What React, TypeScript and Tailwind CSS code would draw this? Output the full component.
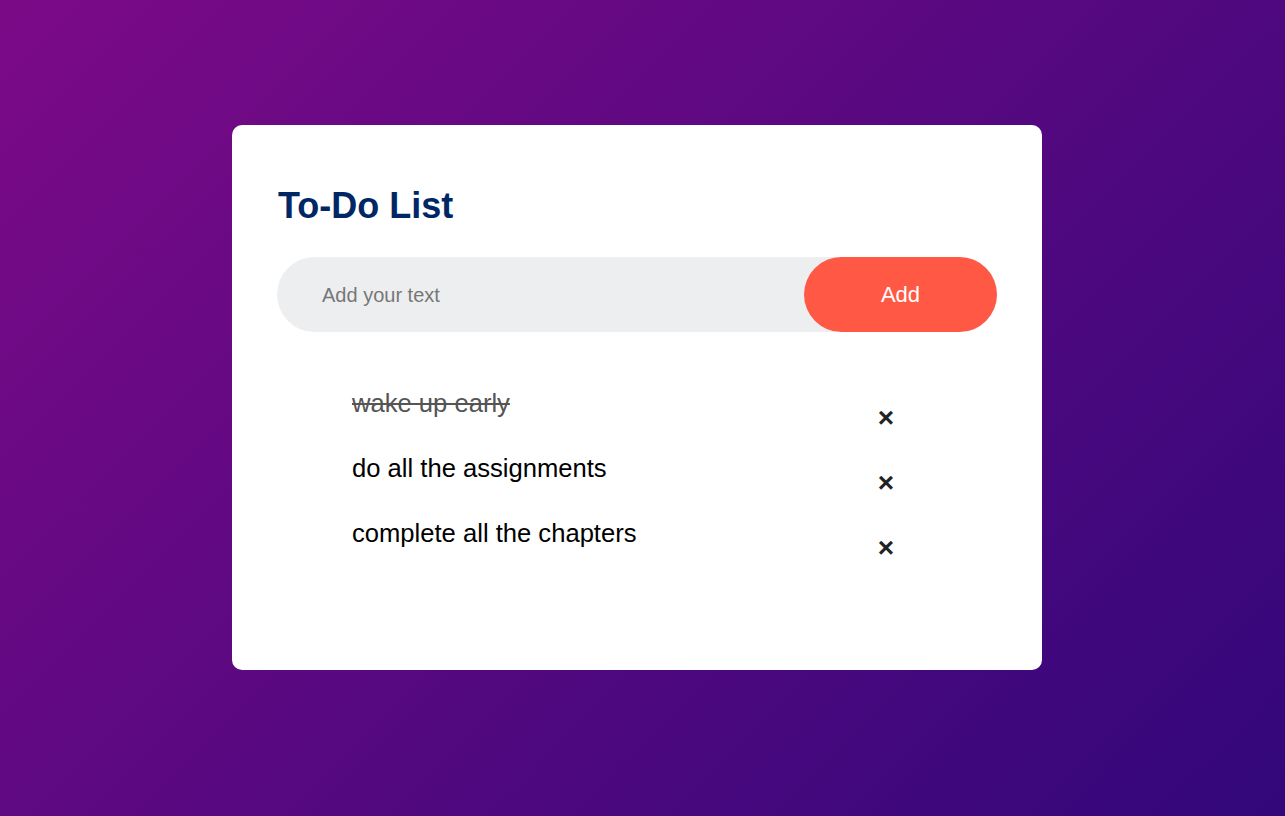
import React from "react";

const items = [
  { text: "wake up early", done: true },
  { text: "do all the assignments", done: false },
  { text: "complete all the chapters", done: false },
];

export default function App() {
  return (
    <div
      className="min-h-[816px] w-full bg-[linear-gradient(135deg,#7c0a87,#32077a)] pt-[125px] pl-[232px]"
      style={{ fontFamily: '"Liberation Sans", Arial, sans-serif' }}
    >
      <div className="w-[810px] h-[545px] bg-white rounded-[10px] pt-[60px] px-[45px]">
        <h2 className="text-[36px] font-bold text-[#002765] leading-[42px] pl-[1px]">To-Do List</h2>
        <div className="mt-[30px] flex items-center h-[75px] rounded-full bg-[#edeef0]">
          <input
            className="flex-1 bg-transparent outline-none pl-[45px] text-[20px] text-[#333] placeholder:text-[#777]"
            placeholder="Add your text"
          />
          <button className="h-[75px] w-[193px] rounded-full bg-[#ff5945] text-white text-[22px]">Add</button>
        </div>
        <ul className="mt-[40px]">
          {items.map((it) => (
            <li key={it.text} className="relative h-[65px] pt-[18px] pl-[75px]">
              <span
                className={
                  "text-[25.6px] leading-[27px] " +
                  (it.done ? "line-through text-[#555]" : "text-black")
                }
              >
                {it.text}
              </span>
              <span className="absolute right-[95px] top-[30px] w-[32px] h-[32px] flex items-center justify-center text-[28px] font-bold leading-none text-[#222]">
                ×
              </span>
            </li>
          ))}
        </ul>
      </div>
    </div>
  );
}
